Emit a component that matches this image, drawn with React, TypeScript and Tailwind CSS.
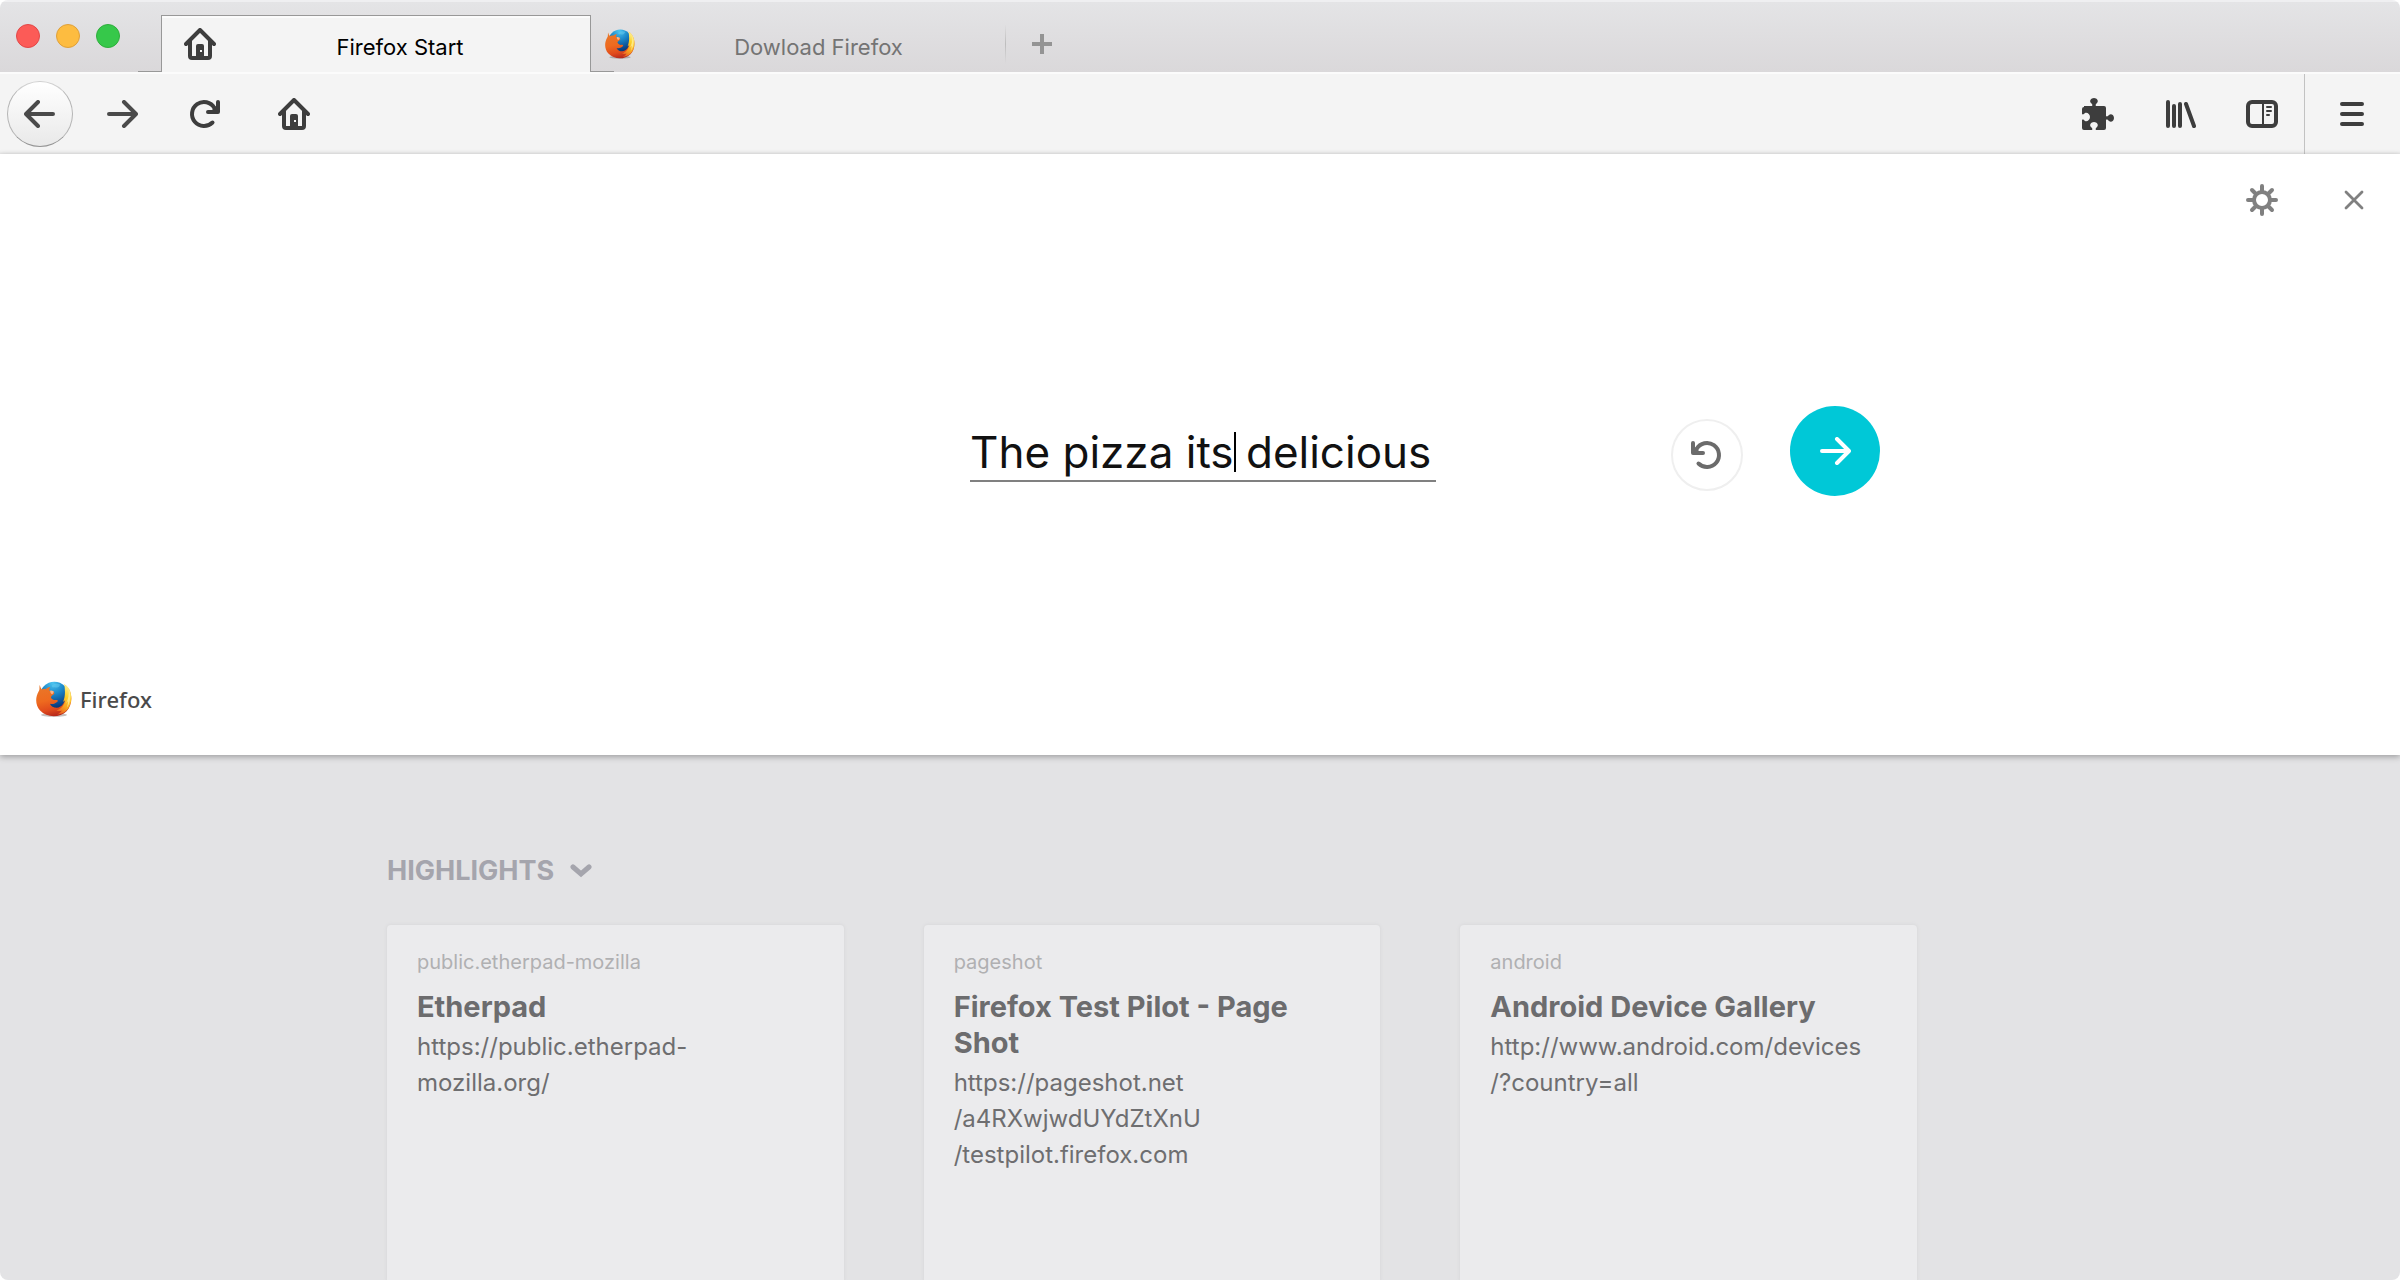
import React, { useId } from "react";

function FirefoxLogo({ className }: { className: string }) {
  const id = useId();
  const ref = (name: string) => `${id}-${name}`;
  const url = (name: string) => `url(#${ref(name)})`;
  return (
    <svg viewBox="0 0 106 106" className={className} aria-hidden="true">
      <defs>
        <radialGradient id={ref("globe")} cx="0.45" cy="0.05" r="0.95">
          <stop offset="0" stopColor="#4cc4f0" />
          <stop offset="0.4" stopColor="#1a86c8" />
          <stop offset="0.75" stopColor="#0c4a8f" />
          <stop offset="1" stopColor="#08265e" />
        </radialGradient>
        <linearGradient id={ref("fox")} x1="0.2" y1="0" x2="0.45" y2="1">
          <stop offset="0" stopColor="#e8782a" />
          <stop offset="0.5" stopColor="#ee6a1f" />
          <stop offset="0.8" stopColor="#e04a1c" />
          <stop offset="1" stopColor="#b82a1c" />
        </linearGradient>
        <linearGradient id={ref("tail")} x1="0.7" y1="0" x2="0.3" y2="1">
          <stop offset="0" stopColor="#fdf3a0" />
          <stop offset="0.35" stopColor="#fcd22c" />
          <stop offset="0.7" stopColor="#f8a020" />
          <stop offset="1" stopColor="#ea6020" />
        </linearGradient>
      </defs>
      <ellipse cx="53" cy="100" rx="38" ry="5" fill="#5a4a46" opacity="0.35" />
      <circle cx="54" cy="45" r="43" fill={url("globe")} />
      <path
        d="M48 12c8-5 18-5 24-1-4 3-2 7-9 8-5 1-7-2-12 0-4 0-6-4-3-7z"
        fill="#6dd0f2"
        opacity="0.45"
      />
      <path
        d="M11 12C9 19 12 23 8 30C-3 48-2 72 12 87c20 22 58 22 78 2 16-17 18-44 8-63-4-8-9-12-14-16 4 10 5 20 4 30-1 22-11 38-27 39-9 0-17-4-20-12 9 3 15-1 21-5 4-3 2-7-3-6-6 1-12-2-15-7 1-6 5-8 9-10 2-3 0-7-1-8-6 1-10-1-13-4 0-3 1-6 3-9-6 1-10 3-13 6-5-2-9 0-12 1-3-4-5-8-6-13z"
        fill={url("fox")}
      />
      <path
        d="M83 9c9 5 15 13 18 22 6 18 3 39-9 54-8 9-18 13-30 14 6-3 11-7 14-12-6 2-11 2-16 0 15-5 24-17 26-31-2 3-4 4-6 5 7-17 6-35 3-52z"
        fill={url("tail")}
      />
      <path d="M96 24c8 18 6 40-5 54 3-8 3-14 3-20-2 4-4 6-6 8 7-13 10-27 8-42z" fill="#fff2a6" opacity="0.7" />
      <path d="M42 28c4 0 8 1 10 3 0 3-1 6-5 8-4-3-6-7-5-11z" fill="#f9b48a" />
    </svg>
  );
}

function HomeIcon() {
  return (
    <svg width="32" height="32" viewBox="0 0 32 32" aria-hidden="true">
      <path d="M2 16 16 2l14 14" fill="none" stroke="#3d3d3d" strokeWidth="4" strokeLinecap="round" strokeLinejoin="round" />
      <path d="M6 13v15a2 2 0 0 0 2 2h16a2 2 0 0 0 2-2V13" fill="none" stroke="#3d3d3d" strokeWidth="4" />
      <path d="M12 30V18a2 2 0 0 1 2-2h4a2 2 0 0 1 2 2v12z" fill="#3d3d3d" />
      <path d="M16 22h2v2h-2z" fill="#f4f4f4" />
    </svg>
  );
}

function ArrowIcon({ className }: { className: string }) {
  return (
    <svg
      width="32"
      height="28"
      viewBox="0 0 32 28"
      className={className}
      fill="none"
      stroke="currentColor"
      strokeWidth="4"
      strokeLinecap="round"
      strokeLinejoin="round"
      aria-hidden="true"
    >
      <path d="M3 14h26M18 2l12 12-12 12" />
    </svg>
  );
}

function ReloadIcon({ className }: { className: string }) {
  return (
    <svg width="32" height="32" viewBox="0 0 32 32" className={className} aria-hidden="true">
      <path d="M24.500 24.500A12 12 0 1 1 26.400 10" fill="none" stroke="currentColor" strokeWidth="4" strokeLinecap="round" />
      <path d="M22 14h8V6z" fill="currentColor" />
      <path d="M30 4v10H20" fill="none" stroke="currentColor" strokeWidth="4" strokeLinecap="round" strokeLinejoin="round" />
    </svg>
  );
}

function PuzzleIcon() {
  return (
    <svg width="32" height="32" viewBox="0 0 32 32" aria-hidden="true" fill="#3d3d3d">
      <path d="M2 8h8c1-1 0-2-1-3-2-2 0-5 3-5s5 3 3 5c-1 1-2 2-1 3h8a2 2 0 0 1 2 2v8c1 1 2 0 3-1 2-2 5 0 5 3s-3 5-5 3c-1-1-2-2-3-1v8a2 2 0 0 1-2 2h-8c-1-1 0-2 1-3 2-2 0-5-3-5s-5 3-3 5c1 1 2 2 1 3H2a2 2 0 0 1-2-2v-8c1-1 2 0 3 1 2 1 5-1 5-4s-3-5-5-4c-1 1-2 2-3 1v-5a2 2 0 0 1 2-2z" />
    </svg>
  );
}

function LibraryIcon() {
  return (
    <svg width="32" height="28" viewBox="0 0 32 28" aria-hidden="true" fill="none" stroke="#3d3d3d" strokeWidth="4" strokeLinecap="round">
      <path d="M4 2v24M10 6v20M16 4v22M22 4l8 22" />
    </svg>
  );
}

function SidebarIcon() {
  return (
    <svg width="32" height="28" viewBox="0 0 32 28" aria-hidden="true" fill="none" stroke="#3d3d3d">
      <rect x="2" y="2" width="28" height="24" rx="4" strokeWidth="4" />
      <path d="M17 3v22" strokeWidth="2" />
      <path d="M21 7h4M21 11h4M21 15h2" strokeWidth="2" strokeLinecap="round" />
    </svg>
  );
}

function MenuIcon() {
  return (
    <svg width="24" height="24" viewBox="0 0 24 24" aria-hidden="true" stroke="#3d3d3d" strokeWidth="4" strokeLinecap="round">
      <path d="M2 2h20M2 12h20M2 22h20" />
    </svg>
  );
}

function GearIcon() {
  return (
    <svg width="32" height="32" viewBox="0 0 32 32" aria-hidden="true" fill="none" stroke="#808080" strokeWidth="4" strokeLinecap="round">
      <circle cx="16" cy="16" r="8" />
      <path d="M16 2v5M16 25v5M2 16h5M25 16h5M6 6l3.500 3.500M22.500 22.500 26 26M6 26l3.500-3.500M22.500 9.500 26 6" />
    </svg>
  );
}

function CloseIcon() {
  return (
    <svg width="20" height="20" viewBox="0 0 20 20" aria-hidden="true" stroke="#808080" strokeWidth="2.800" strokeLinecap="round">
      <path d="m2 2 16 16M18 2 2 18" />
    </svg>
  );
}

const toolButton = "flex h-[66px] w-[66px] items-center justify-center";

const highlights = [
  { site: "public.etherpad-mozilla", title: "Etherpad", url: ["https://public.etherpad-", "mozilla.org/"] },
  {
    site: "pageshot",
    title: "Firefox Test Pilot - Page Shot",
    url: ["https://pageshot.net", "/a4RXwjwdUYdZtXnU", "/testpilot.firefox.com"],
  },
  { site: "android", title: "Android Device Gallery", url: ["http://www.android.com/devices", "/?country=all"] },
];

function TabStrip() {
  return (
    <header className="flex h-[72px] items-end border-t-2 border-[#efeff1] bg-linear-to-b from-[#e4e4e6] to-[#dad8da]">
      <div className="flex h-[70px] flex-none items-center gap-4 pr-[41px] pb-[2px] pl-4">
        <button aria-label="Close window" className="size-6 rounded-full border border-[#e24848] bg-[#fc5b57]" />
        <button aria-label="Minimize window" className="size-6 rounded-full border border-[#dfa03a] bg-[#fdbc40]" />
        <button aria-label="Zoom window" className="size-6 rounded-full border border-[#2fae3c] bg-[#36c84a]" />
      </div>
      <div role="tablist" className="flex h-[57px]">
        <button
          role="tab"
          aria-selected="true"
          className="relative flex w-[430px] items-center border border-b-0 border-[#989898] bg-[#f4f4f4] pr-[6px] pl-[22px] shadow-[inset_0_2px_0_#fbfbfb] before:absolute before:right-full before:bottom-0 before:h-px before:w-6 before:bg-[#989898] after:absolute after:bottom-0 after:left-full after:h-px after:w-6 after:bg-[#989898]"
        >
          <HomeIcon />
          <span className="flex-1 pt-[6px] text-center text-[22px] leading-7 text-black">Firefox Start</span>
        </button>
        <button role="tab" aria-selected="false" className="flex w-[414px] items-center pr-[3px] pl-[14px]">
          <FirefoxLogo className="size-[30px]" />
          <span className="flex-1 pt-[6px] text-center text-[22px] leading-7 text-[#747474]">Dowload Firefox</span>
        </button>
      </div>
      <div className="mb-2 h-10 w-px bg-linear-to-b from-transparent via-[#bdbdbd] to-transparent" />
      <button aria-label="New tab" className="flex h-[57px] w-[72px] items-center justify-center">
        <svg width="20" height="20" viewBox="0 0 20 20" aria-hidden="true" stroke="#949494" strokeWidth="4">
          <path d="M10 0v20M0 10h20" />
        </svg>
      </button>
    </header>
  );
}

function Toolbar() {
  return (
    <nav className="flex h-[82px] items-stretch justify-between border-t-2 border-[#fbfbfb] bg-[#f4f4f4] shadow-[inset_0_-4px_4px_-4px_#dcdcdc]">
      <div className="flex items-center gap-4 pl-[7px]">
        <button
          aria-label="Back"
          className={`${toolButton} rounded-full border border-[#b4b4b4] border-t-[#cfcfcf] border-b-[#949494] bg-linear-to-b from-white to-[#e9e9e9] text-[#4a4a4a]`}
        >
          <ArrowIcon className="rotate-180" />
        </button>
        <button aria-label="Forward" className={`${toolButton} text-[#4a4a4a]`}>
          <ArrowIcon className="" />
        </button>
        <button aria-label="Reload" className={`${toolButton} text-[#3d3d3d]`}>
          <ReloadIcon className="" />
        </button>
        <button aria-label="Home" className={`${toolButton} ml-2`}>
          <HomeIcon />
        </button>
      </div>
      <div className="flex items-center">
        <div className="flex gap-4 pr-[9px]">
          <button aria-label="Add-ons" className={toolButton}>
            <PuzzleIcon />
          </button>
          <button aria-label="Library" className={toolButton}>
            <LibraryIcon />
          </button>
          <button aria-label="Sidebar" className={toolButton}>
            <SidebarIcon />
          </button>
        </div>
        <button
          aria-label="Menu"
          className="flex w-24 items-center justify-center self-stretch border-l border-[#c2c2c2] pr-[2px]"
        >
          <MenuIcon />
        </button>
      </div>
    </nav>
  );
}

function SpeechPanel() {
  return (
    <section className="relative z-10 bg-white pb-[38px] shadow-[0_2px_6px_rgba(0,0,0,0.3)]">
      <div className="flex h-[92px] items-center justify-end gap-[26px] pr-[13px]">
        <button aria-label="Settings" className={toolButton}>
          <GearIcon />
        </button>
        <button aria-label="Close" className={toolButton}>
          <CloseIcon />
        </button>
      </div>
      <form className="mt-40 grid grid-cols-[1fr_466px_1fr] items-center pl-[6px]" onSubmit={(e) => e.preventDefault()}>
        <div className="relative col-start-2">
          <input
            aria-label="Recognized text"
            defaultValue="The pizza its delicious"
            className="h-[62px] w-full border-b-2 border-[#808080] bg-transparent pt-[3px] text-[44px] text-[#111111] outline-none"
          />
          <span className="absolute top-[12px] left-[264px] h-10 w-[2px] bg-black" />
        </div>
        <div className="flex items-center gap-[47px] pl-[235px]">
          <button
            type="button"
            aria-label="Undo"
            className="mt-2 flex size-[72px] flex-none items-center justify-center rounded-full border-2 border-[#efefef] text-[#6b6b6b]"
          >
            <ReloadIcon className="-scale-x-100" />
          </button>
          <button
            type="submit"
            aria-label="Search"
            className="flex size-[90px] flex-none items-center justify-center rounded-full bg-[#00c8d7] text-white"
          >
            <ArrowIcon className="" />
          </button>
        </div>
      </form>
      <div className="mt-[184px] flex items-center gap-2 pl-9">
        <FirefoxLogo className="size-9" />
        <span className="pt-px font-['Noto_Sans',sans-serif] text-[22px] leading-9 font-medium text-[#4a4a4a]">Firefox</span>
      </div>
    </section>
  );
}

function Highlights() {
  return (
    <main className="flex flex-1 flex-col items-center bg-[#e3e3e5] pt-[98px] pr-24">
      <div className="flex w-full max-w-[1530px] flex-1 flex-col">
        <h2>
          <button className="flex items-center gap-4 text-[27px] leading-9 font-bold text-[#a5a5ad]">
            HIGHLIGHTS
            <svg width="22" height="14" viewBox="0 0 22 14" aria-hidden="true" fill="none" stroke="currentColor" strokeWidth="5" strokeLinecap="round" strokeLinejoin="miter">
              <path d="m3 3 8 7 8-7" />
            </svg>
          </button>
        </h2>
        <div className="mt-9 grid flex-1 grid-cols-3 gap-20">
          {highlights.map((item) => (
            <a
              key={item.site}
              href="#"
              className="block rounded-t-[4px] bg-[#ebebed] px-[30px] pt-[23px] shadow-[0_0_3px_1px_#dadadc]"
            >
              <p className="text-[20px] leading-7 text-[#b0b0b2]">{item.site}</p>
              <h3 className="mt-[13px] text-[29px] leading-9 font-bold text-[#6c6c6e]">{item.title}</h3>
              <p className="mt-1 text-[24px] leading-9 text-[#6e6e70]">
                {item.url.map((line) => (
                  <span key={line} className="block">
                    {line}
                  </span>
                ))}
              </p>
            </a>
          ))}
        </div>
      </div>
    </main>
  );
}

export default function App() {
  return (
    <div className="flex min-h-screen flex-col overflow-hidden rounded-lg bg-white font-['Inter',sans-serif]">
      <TabStrip />
      <Toolbar />
      <SpeechPanel />
      <Highlights />
    </div>
  );
}
